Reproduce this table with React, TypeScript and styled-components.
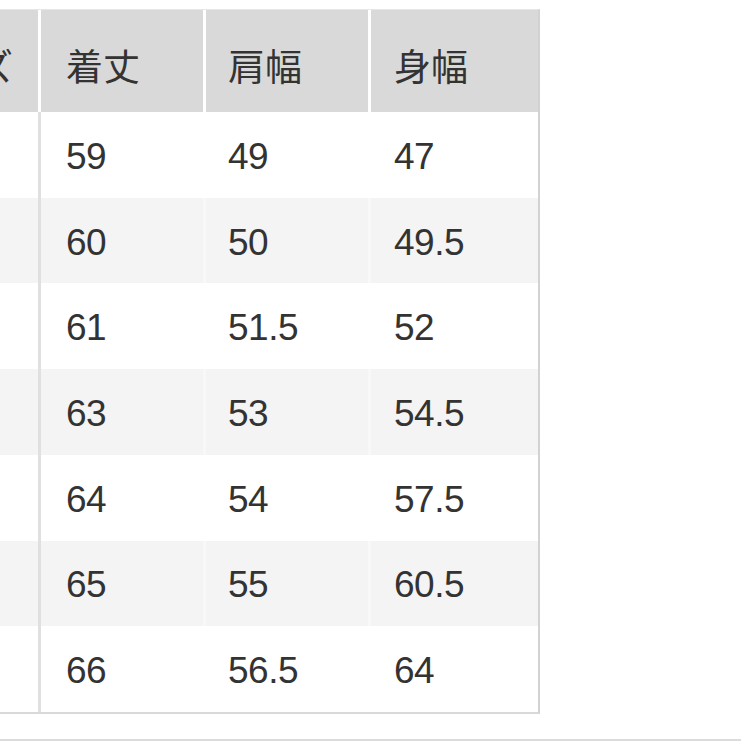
import React from "react";
import styled, { createGlobalStyle } from "styled-components";

const GlobalStyle = createGlobalStyle`
  html, body {
    margin: 0;
    padding: 0;
    background: #ffffff;
    overflow: hidden;
  }
`;

const Page = styled.div`
  width: 741px;
  height: 741px;
  overflow: hidden;
  display: flex;
  flex-direction: column;
  padding-top: 9px;
  box-sizing: border-box;
  font-family: "Liberation Sans", "Noto Sans CJK JP", Arial, sans-serif;
  color: #333333;
`;

const Table = styled.div`
  display: flex;
  flex-direction: column;
  width: 657px;
  margin-left: -119px;
  border-top: 1px solid #e6e6e6;
  border-right: 2px solid #d2d2d2;
  border-bottom: 2px solid #d9d9d9;
`;

const Row = styled.div<{ $head?: boolean; $shade?: boolean }>`
  display: grid;
  grid-template-columns: 160px 165px 165px 167px;
  height: ${(p) => (p.$head ? "102px" : "85.72px")};
  background: ${(p) => (p.$head ? "#d9d9d9" : p.$shade ? "#f4f4f4" : "#ffffff")};
`;

const Cell = styled.div<{ $head?: boolean; $shade?: boolean; $first?: boolean; $last?: boolean; $indent: number }>`
  display: flex;
  align-items: center;
  padding-left: ${(p) => p.$indent}px;
  padding-top: ${(p) => (p.$head ? "7px" : "4px")};
  box-sizing: border-box;
  font-size: 37px;
  letter-spacing: ${(p) => (p.$head ? "0px" : "-0.5px")};
  white-space: nowrap;
  border-right: ${(p) =>
    p.$last
      ? "none"
      : p.$head
      ? "3px solid #ffffff"
      : p.$first
      ? "3px solid #e0e0e0"
      : p.$shade
      ? "3px solid #f8f8f8"
      : "3px solid #ffffff"};
`;

const BottomRule = styled.div`
  margin-top: auto;
  height: 2px;
  background: #dcdcdc;
  width: 100%;
`;

const indents = [22, 25, 22, 23];
const header = ["サイズ", "着丈", "肩幅", "身幅"];
const rows: string[][] = [
  ["XS", "59", "49", "47"],
  ["S", "60", "50", "49.5"],
  ["M", "61", "51.5", "52"],
  ["L", "63", "53", "54.5"],
  ["XL", "64", "54", "57.5"],
  ["XXL", "65", "55", "60.5"],
  ["3XL", "66", "56.5", "64"],
];

export default function App() {
  return (
    <>
      <GlobalStyle />
      <Page>
        <Table>
          <Row $head>
            {header.map((h, i) => (
              <Cell
                key={h}
                $head
                $indent={indents[i]}
                $first={i === 0}
                $last={i === header.length - 1}
              >
                {h}
              </Cell>
            ))}
          </Row>
          {rows.map((r, ri) => {
            const shade = ri % 2 === 1;
            return (
              <Row key={ri} $shade={shade}>
                {r.map((v, ci) => (
                  <Cell
                    key={ci}
                    $shade={shade}
                    $indent={indents[ci]}
                    $first={ci === 0}
                    $last={ci === r.length - 1}
                  >
                    {v}
                  </Cell>
                ))}
              </Row>
            );
          })}
        </Table>
        <BottomRule />
      </Page>
    </>
  );
}
